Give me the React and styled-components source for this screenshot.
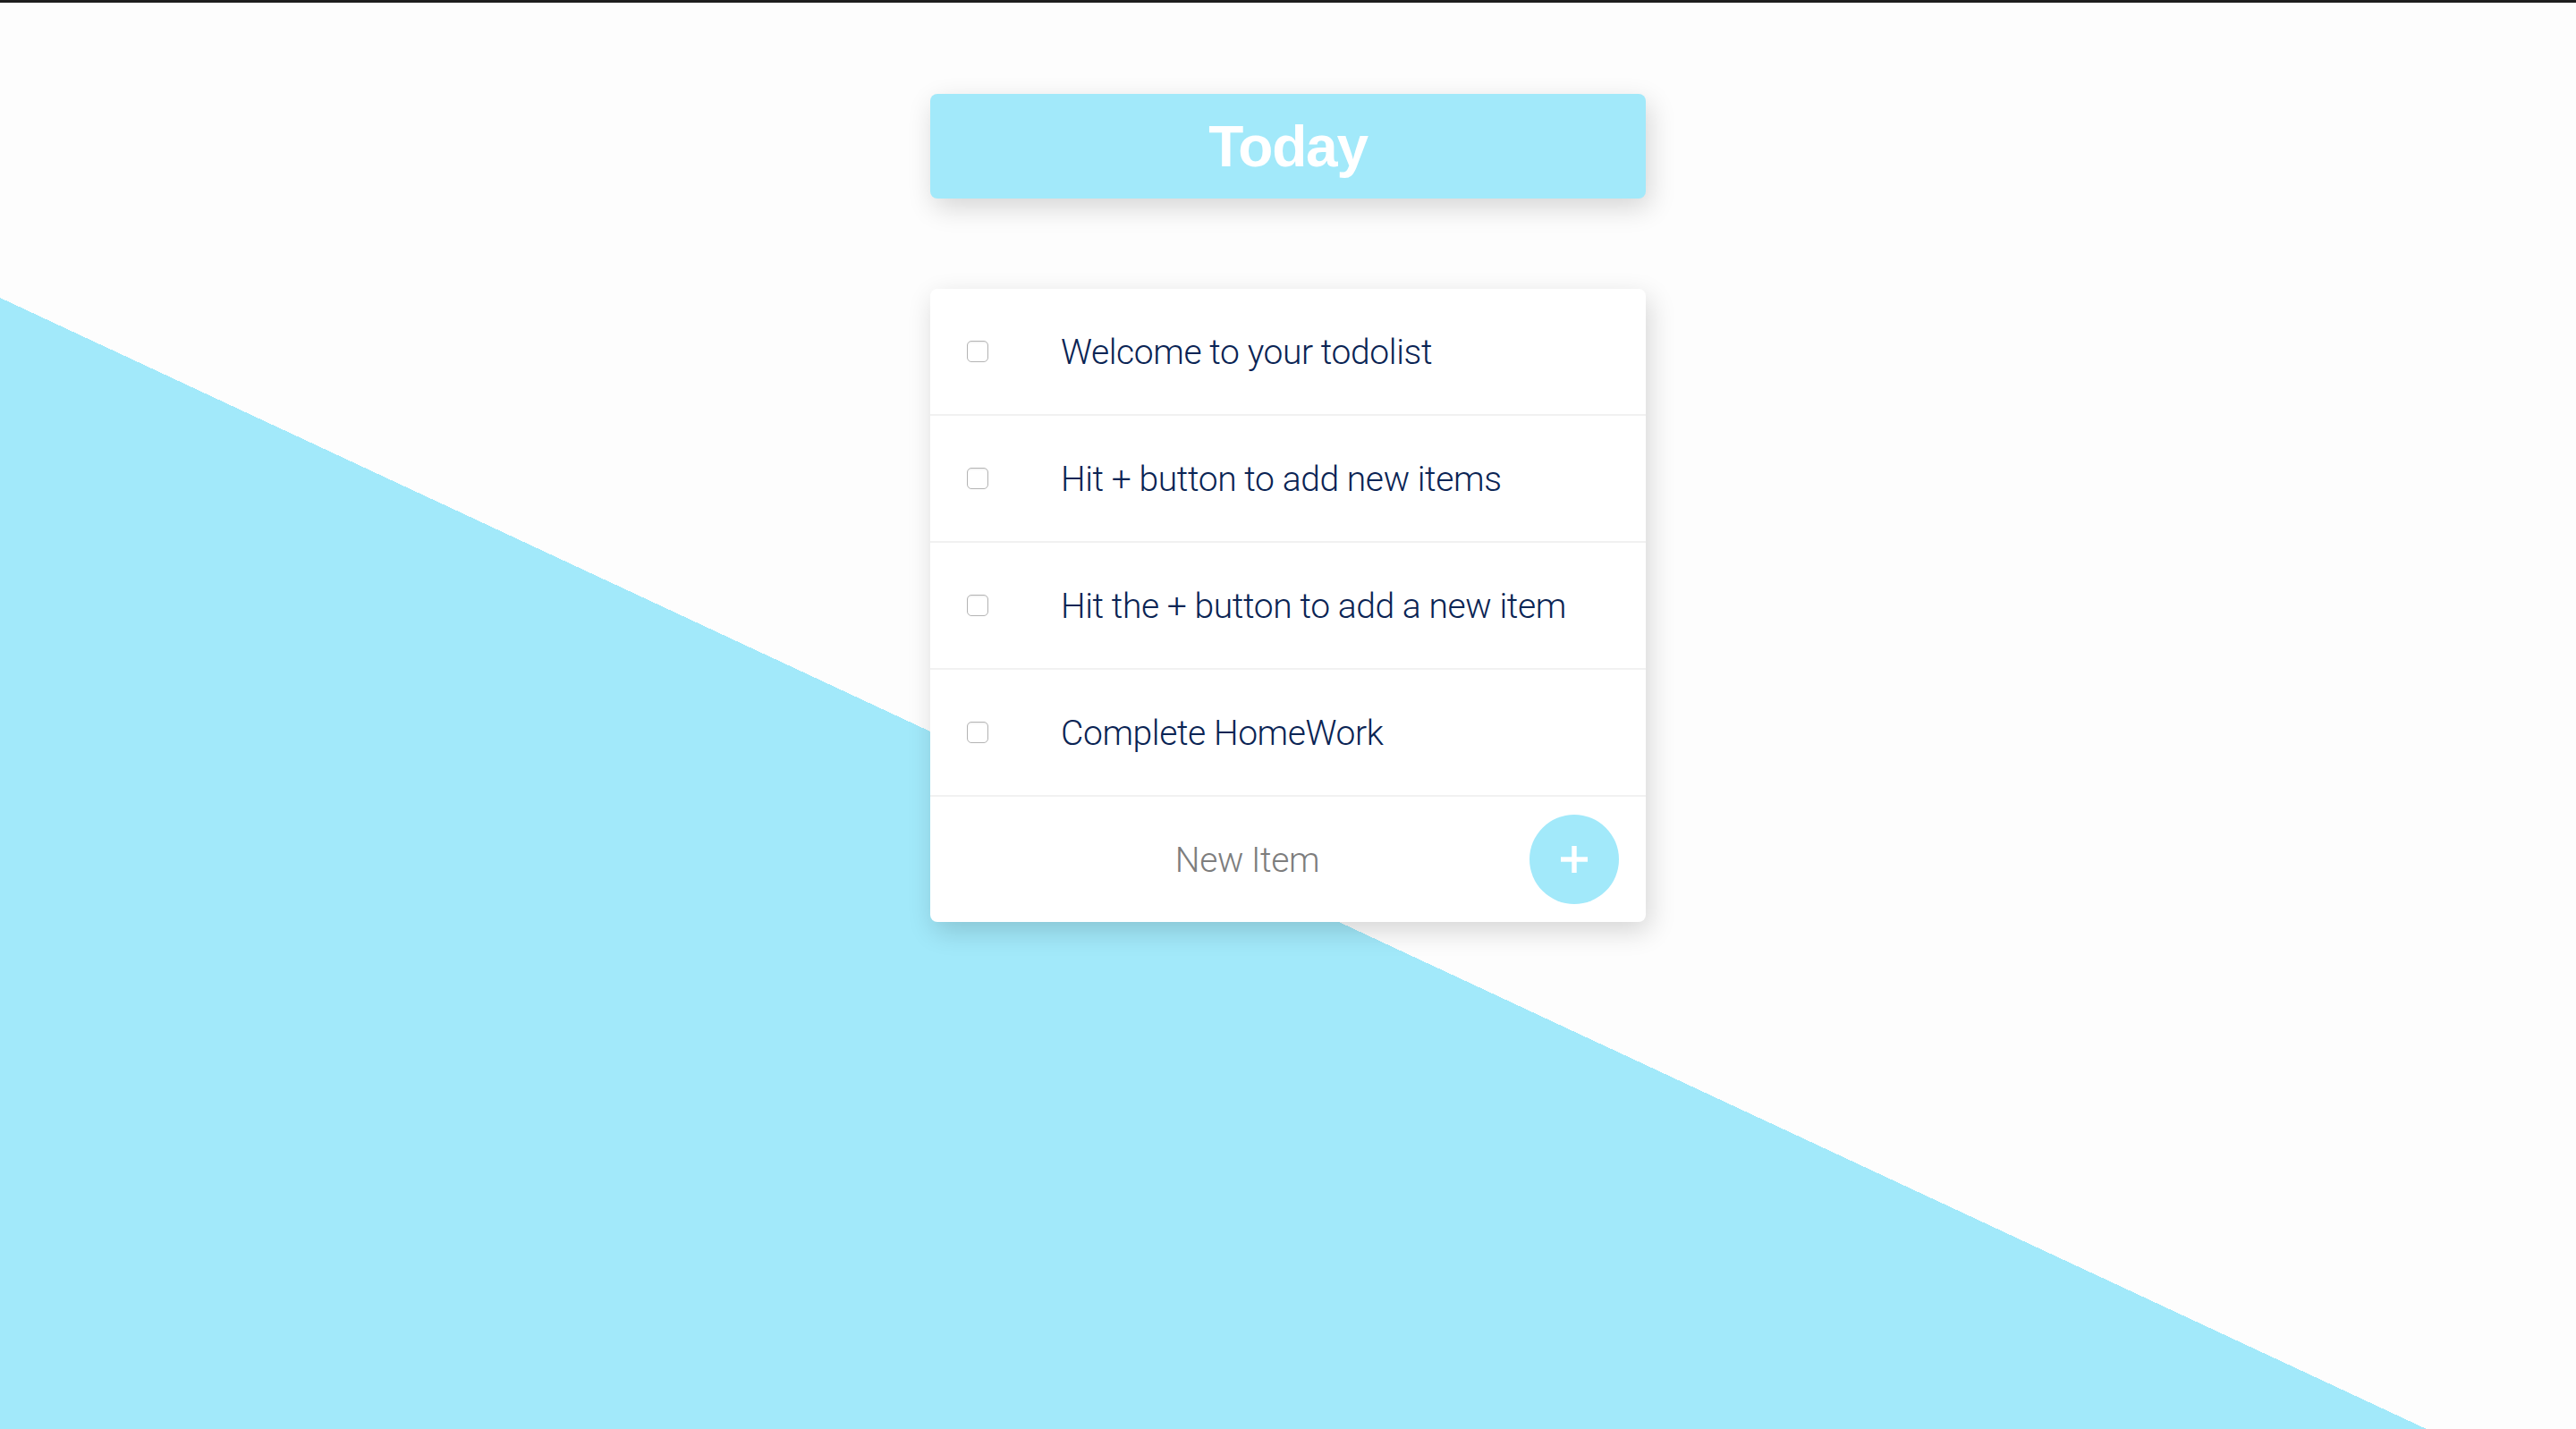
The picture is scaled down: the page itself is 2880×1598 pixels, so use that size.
import React from "react";
import styled, { createGlobalStyle } from "styled-components";

const GlobalStyle = createGlobalStyle`
  html, body { margin: 0; padding: 0; height: 100%; }
  * { box-sizing: border-box; }
`;

const BLUE = "#a2e9fa";

const Page = styled.div`
  width: 100%;
  min-height: 100vh;
  border-top: 3px solid #1e1e1e;
  background: linear-gradient(25deg, ${BLUE} 1146.5px, #fdfdfd 1146.5px);
  display: flex;
  flex-direction: column;
  align-items: center;
  padding-top: 102px;
  font-family: Roboto, "Liberation Sans", Arial, sans-serif;
`;

const Header = styled.header`
  width: 800px;
  height: 117px;
  background: ${BLUE};
  border-radius: 8px;
  box-shadow: 4px 10px 30px rgba(0, 0, 0, 0.16);
  display: flex;
  align-items: center;
  justify-content: center;
`;

const Title = styled.h1`
  margin: 0;
  color: #ffffff;
  font-family: "Liberation Sans", Arial, sans-serif;
  font-weight: 700;
  font-size: 64px;
  letter-spacing: -1.2px;
`;

const Card = styled.section`
  width: 800px;
  margin-top: 101px;
  background: #ffffff;
  border-radius: 8px;
  box-shadow: 4px 10px 30px rgba(0, 0, 0, 0.16);
  overflow: hidden;
`;

const Row = styled.div`
  height: 142px;
  display: flex;
  align-items: center;
  border-bottom: 2px solid #f1f1f1;
`;

const Check = styled.input.attrs({ type: "checkbox" })`
  appearance: none;
  -webkit-appearance: none;
  margin: 0 0 0 41px;
  width: 24px;
  height: 24px;
  border: 1.5px solid #b4b4b4;
  border-radius: 5px;
  background: #fff;
  box-shadow: inset 0 1px 2px rgba(0, 0, 0, 0.08);
  flex: none;
`;

const ItemText = styled.p`
  margin: 2px 0 0 81px;
  color: #0a2454;
  font-family: Roboto, "Liberation Sans", Arial, sans-serif;
  font-weight: 300;
  font-size: 39px;
  letter-spacing: -0.4px;
`;

const Form = styled.form`
  height: 140px;
  display: flex;
  align-items: center;
  padding-right: 30px;
`;

const NewInput = styled.input`
  flex: 1;
  min-width: 0;
  height: 100%;
  border: none;
  outline: none;
  background: transparent;
  padding: 2px 0 0 39px;
  text-align: center;
  font-family: Roboto, "Liberation Sans", Arial, sans-serif;
  font-weight: 300;
  font-size: 39px;
  letter-spacing: -0.4px;
  color: #0a2454;
  &::placeholder {
    color: #7d7d7d;
    opacity: 1;
  }
`;

const AddButton = styled.button`
  width: 100px;
  height: 100px;
  border-radius: 50%;
  border: none;
  padding: 0;
  background: ${BLUE};
  display: flex;
  align-items: center;
  justify-content: center;
  flex: none;
  cursor: pointer;
`;

const items = [
  "Welcome to your todolist",
  "Hit + button to add new items",
  "Hit the + button to add a new item",
  "Complete HomeWork",
];

export default function App() {
  return (
    <>
      <GlobalStyle />
      <Page>
        <Header>
          <Title>Today</Title>
        </Header>
        <Card>
          {items.map((t) => (
            <Row key={t}>
              <Check />
              <ItemText>{t}</ItemText>
            </Row>
          ))}
          <Form onSubmit={(e) => e.preventDefault()}>
            <NewInput placeholder="New Item" />
            <AddButton type="submit" aria-label="Add">
              <svg width="30" height="30" viewBox="0 0 30 30">
                <rect x="12.3" y="0" width="5.4" height="30" fill="#fff" />
                <rect x="0" y="12.3" width="30" height="5.4" fill="#fff" />
              </svg>
            </AddButton>
          </Form>
        </Card>
      </Page>
    </>
  );
}
